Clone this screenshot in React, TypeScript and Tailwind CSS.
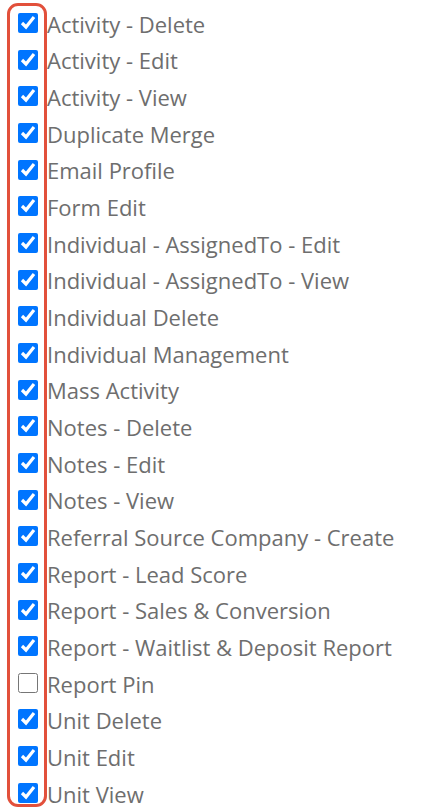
const permissions: { label: string; checked: boolean }[] = [
  { label: "Activity - Delete", checked: true },
  { label: "Activity - Edit", checked: true },
  { label: "Activity - View", checked: true },
  { label: "Duplicate Merge", checked: true },
  { label: "Email Profile", checked: true },
  { label: "Form Edit", checked: true },
  { label: "Individual - AssignedTo - Edit", checked: true },
  { label: "Individual - AssignedTo - View", checked: true },
  { label: "Individual Delete", checked: true },
  { label: "Individual Management", checked: true },
  { label: "Mass Activity", checked: true },
  { label: "Notes - Delete", checked: true },
  { label: "Notes - Edit", checked: true },
  { label: "Notes - View", checked: true },
  { label: "Referral Source Company - Create", checked: true },
  { label: "Report - Lead Score", checked: true },
  { label: "Report - Sales & Conversion", checked: true },
  { label: "Report - Waitlist & Deposit Report", checked: true },
  { label: "Report Pin", checked: false },
  { label: "Unit Delete", checked: true },
  { label: "Unit Edit", checked: true },
  { label: "Unit View", checked: true },
];

export default function App() {
  return (
    <div className="h-[811px] w-[444px] overflow-hidden bg-white font-['Open_Sans',sans-serif]">
      <div className="flex pl-[7px]">
        {/* highlighted checkbox column */}
        <div className="mt-[3px] h-[804px] w-[40px] shrink-0 rounded-[11px] border-[3px] border-[#e2503b]">
          <div className="-mt-[1.33px] flex flex-col pl-[8px]">
            {permissions.map((p) => (
              <div key={p.label} className="flex h-[36.67px] items-center">
                <input
                  type="checkbox"
                  defaultChecked={p.checked}
                  className="m-0 h-5 w-5 accent-[#0075ff]"
                />
              </div>
            ))}
          </div>
        </div>
        <div className="flex flex-col pt-[6px]">
          {permissions.map((p) => (
            <div
              key={p.label}
              className="flex h-[36.67px] items-center whitespace-nowrap text-[22px] text-[#6e6e6e]"
            >
              {p.label}
            </div>
          ))}
        </div>
      </div>
    </div>
  );
}
